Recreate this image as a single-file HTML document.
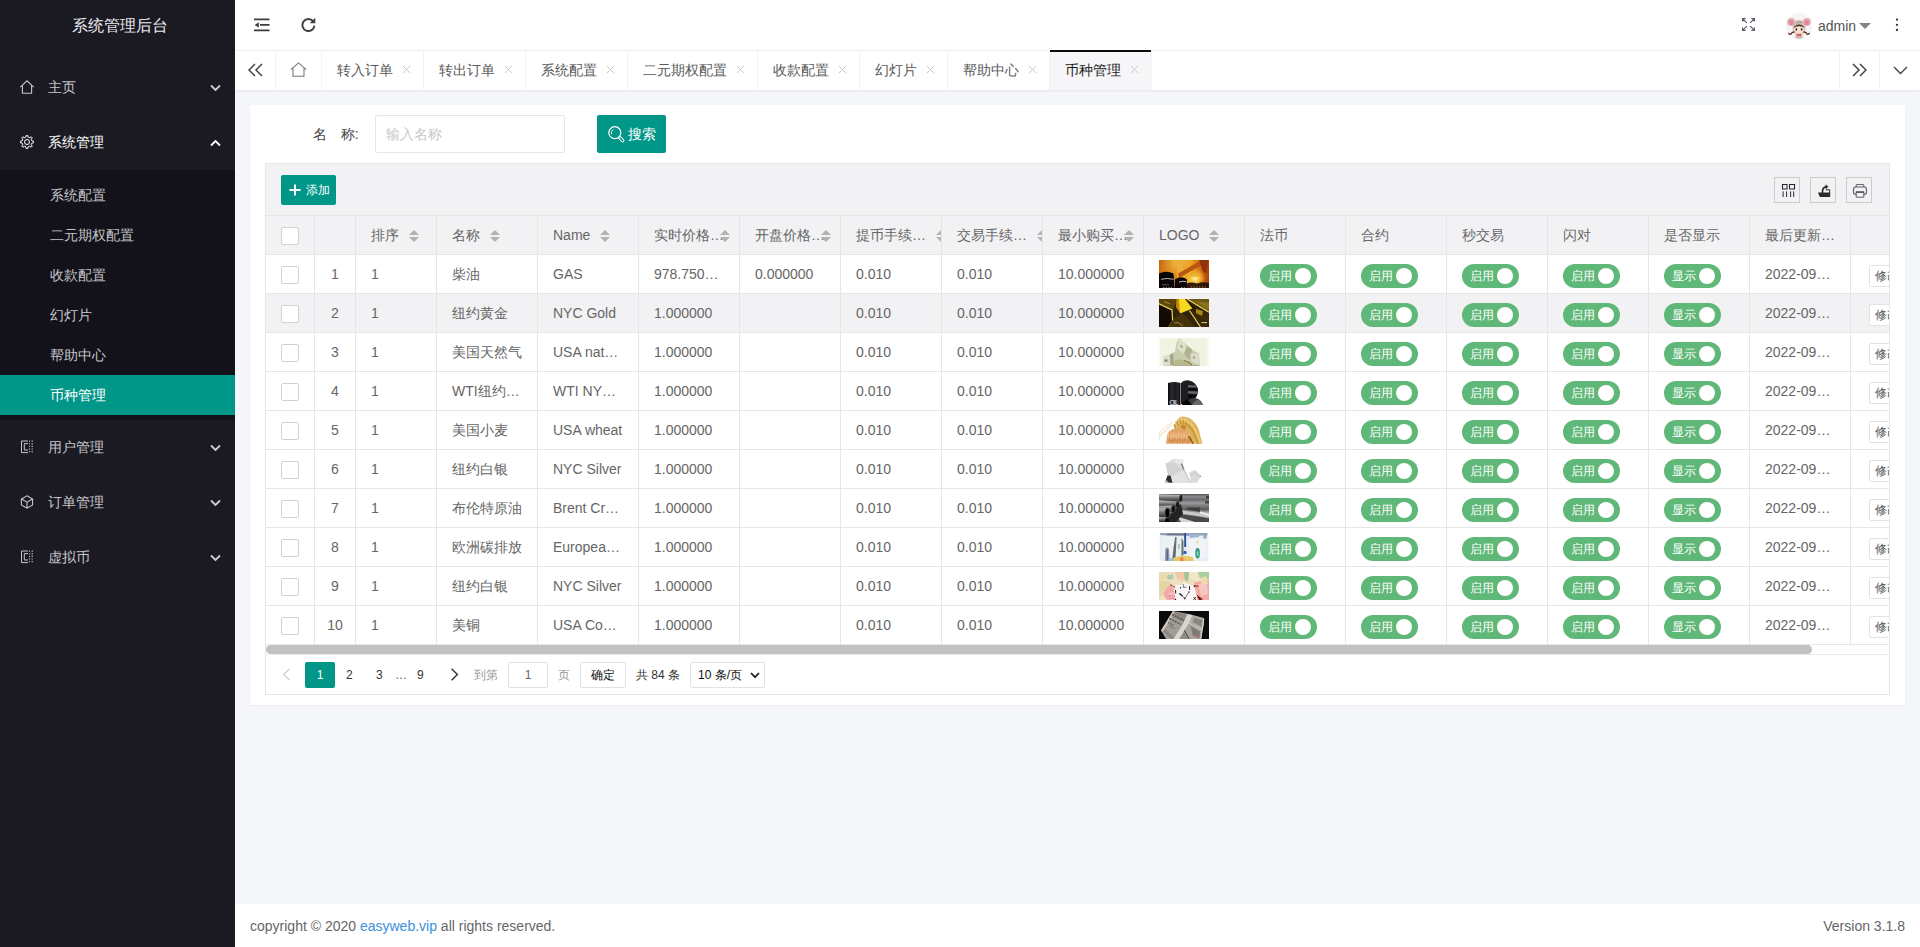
<!DOCTYPE html>
<html lang="zh">
<head>
<meta charset="utf-8">
<title>系统管理后台</title>
<style>
*{box-sizing:border-box;margin:0;padding:0}
html,body{width:1920px;height:947px;overflow:hidden}
body{font-family:"Liberation Sans",sans-serif;font-size:14px;color:#333;background:#f5f6f9;position:relative;line-height:24px}
a{text-decoration:none;color:inherit}
svg{display:block}
.abs{position:absolute}

/* ---------- sidebar ---------- */
#side{position:absolute;left:0;top:0;width:235px;height:947px;background:#1b1a23;color:rgba(255,255,255,.7);z-index:5}
#logo{position:absolute;left:2px;top:0;width:235px;height:50px;line-height:52px;text-align:center;font-size:16px;color:#ececee;letter-spacing:0}
.nav{position:absolute;left:0;top:60px;width:235px}
.item{position:relative;height:55px;line-height:55px;padding-left:48px;color:#c6c6c9;font-size:14px}
.item.on{color:#fff}
.item .ico{position:absolute;left:20px;top:20px;width:14px;height:14px}
.item .arr{position:absolute;left:210px;top:24px;width:11px;height:8px}
.sub{background:#13121a;padding:5px 0}
.sub div{height:40px;line-height:40px;padding-left:50px;color:#c6c6c9}
.sub div.this{background:#009688;color:#fff}

/* ---------- header ---------- */
#head{position:absolute;left:235px;top:0;width:1685px;height:50px;background:#fff}
#tabs{position:absolute;left:235px;top:50px;width:1685px;height:40px;background:#fff;border-top:1px solid #f0f0f1;box-shadow:0 1px 2px rgba(0,0,0,.08)}
.tab{position:absolute;top:-1px;height:40px;line-height:40px;border-right:1px solid #f3f3f4;color:#595959;font-size:14px;padding-left:15px;white-space:nowrap}
.tab .x{position:absolute;right:12px;top:15px;width:9px;height:9px}
.tab.this{color:#1a1a1a;background:#f6f6f8;box-shadow:inset 0 2px 0 #0c0c0e}

/* ---------- card ---------- */
#card{position:absolute;left:250px;top:105px;width:1655px;height:600px;background:#fff;border-radius:2px;box-shadow:0 1px 2px rgba(0,0,0,.05)}
#lbl{position:absolute;left:313px;top:115px;height:38px;line-height:38px;color:#444;font-size:14px;white-space:pre;word-spacing:.7px}
#inp{position:absolute;left:375px;top:115px;width:190px;height:38px;border:1px solid #e6e6e6;border-radius:2px;background:#fff;line-height:36px;padding-left:10px;color:#c8c8c8;font-size:14px}
#sbtn{position:absolute;left:597px;top:115px;width:69px;height:38px;background:#009688;border-radius:2px;color:#fff;font-size:14px;line-height:38px;padding-left:31px}
#sbtn svg{position:absolute;left:11px;top:11px}

#tview{position:absolute;left:265px;top:163px;width:1625px;height:532px;border:1px solid #e6e6e6;background:#fff;overflow:hidden}
#tool{position:absolute;left:0;top:0;width:1623px;height:52px;background:#f2f2f4;border-bottom:1px solid #e6e6e6}
#add{position:absolute;left:15px;top:11px;width:55px;height:30px;background:#009688;border-radius:2px;color:#fff;font-size:12px;line-height:30px;padding-left:25px}
#add svg{position:absolute;left:8px;top:9px}
.tb{position:absolute;top:13px;width:26px;height:26px;border:1px solid #ccc;background:#f2f2f4}
.tb svg{position:absolute;left:4px;top:4px}

table{position:absolute;left:0;top:52px;width:1645px;border-collapse:separate;border-spacing:0;table-layout:fixed}
th,td{height:39px;border-right:1px solid #e6e6e6;border-bottom:1px solid #e6e6e6;padding:0 0 0 15px;text-align:left;font-weight:400;font-size:14px;color:#666;white-space:nowrap;overflow:hidden;position:relative}
th{background:#f2f2f4;color:#666}
tr.hv td{background:#f2f2f4}
td.c,th.c{padding:0;text-align:center}
.cb{display:inline-block;width:18px;height:18px;border:1px solid #d2d2d2;border-radius:2px;background:#fff;vertical-align:middle;position:relative;top:0}
.sort{display:inline-block;position:relative;width:10px;height:20px;vertical-align:middle;margin-left:10px;top:0}
.sort:before{content:"";position:absolute;left:0;top:4px;border:5px solid transparent;border-top:0;border-bottom:5px solid #b2b2b2}
.sort:after{content:"";position:absolute;left:0;top:11px;border:5px solid transparent;border-bottom:0;border-top:5px solid #b2b2b2}
.sw{position:absolute;left:15px;top:9px;width:57px;height:24px;border-radius:12px;background:#5fb878;color:#fff;font-size:12px;line-height:24px;padding-left:8px}
.sw i{position:absolute;left:35px;top:4px;width:16px;height:16px;border-radius:8px;background:#fff}
.lg{position:absolute;left:15px;top:5px;width:50px;height:28px;overflow:hidden}
.eb{position:absolute;left:18px;top:10px;width:40px;height:22px;border:1px solid #e2e2e2;border-radius:2px;background:#fff;font-size:12px;line-height:20px;padding-left:5px;color:#555}

#hbar{position:absolute;left:0;top:481px;width:1546px;height:9px;border-radius:5px;background:#c1c1c1}
#page{position:absolute;left:0;top:490px;width:1623px;height:40px;border-top:1px solid #ebebee;font-size:12px;color:#333}
#page span,#page div{position:absolute;top:7px;height:26px;line-height:26px;white-space:nowrap}

#foot{position:absolute;left:235px;top:904px;width:1685px;height:43px;background:#fff;line-height:44px;padding:0 15px;color:#666;font-size:14px}
#foot b{font-weight:400;color:#3b8fd9}
</style>
</head>
<body>

<!-- SIDEBAR -->
<div id="side">
  <div id="logo">系统管理后台</div>
  <div class="nav">
    <div class="item"><svg class="ico" viewBox="0 0 14 14"><path d="M0.3 7.2 L7 0.8 L13.7 7.2 M2.4 5.6 V13.2 H11.6 V5.6" fill="none" stroke="#c6c6c9" stroke-width="1.1"/></svg>主页<svg class="arr" viewBox="0 0 11 8"><path d="M1 1.5 L5.5 6 L10 1.5" fill="none" stroke="#d0d0d3" stroke-width="1.8"/></svg></div>
    <div class="item on"><svg class="ico" viewBox="0 0 14 14"><path d="M5.93 2.12 L6.21 0.35 L7.79 0.35 L8.07 2.12 L9.70 2.79 L11.15 1.74 L12.26 2.85 L11.21 4.30 L11.88 5.93 L13.65 6.21 L13.65 7.79 L11.88 8.07 L11.21 9.70 L12.26 11.15 L11.15 12.26 L9.70 11.21 L8.07 11.88 L7.79 13.65 L6.21 13.65 L5.93 11.88 L4.30 11.21 L2.85 12.26 L1.74 11.15 L2.79 9.70 L2.12 8.07 L0.35 7.79 L0.35 6.21 L2.12 5.93 L2.79 4.30 L1.74 2.85 L2.85 1.74 L4.30 2.79 Z" fill="none" stroke="#fff" stroke-width="1" stroke-linejoin="round"/><circle cx="7" cy="7" r="2.5" fill="none" stroke="#fff" stroke-width="1"/></svg>系统管理<svg class="arr" viewBox="0 0 11 8"><path d="M1 6.5 L5.5 2 L10 6.5" fill="none" stroke="#fff" stroke-width="1.8"/></svg></div>
    <div class="sub">
      <div>系统配置</div>
      <div>二元期权配置</div>
      <div>收款配置</div>
      <div>幻灯片</div>
      <div>帮助中心</div>
      <div class="this">币种管理</div>
    </div>
    <div class="item"><svg class="ico" viewBox="0 0 14 14"><path d="M8 1 H1.5 V12.6 H8 M8 3.6 H4.3 V10 H8" fill="none" stroke="#c6c6c9" stroke-width="1"/><path d="M9.6 0.6 V13" stroke="#c6c6c9" stroke-width="1" stroke-dasharray="1.2 1.4"/><path d="M12.2 0.6 V13" stroke="#c6c6c9" stroke-width="1.2" stroke-dasharray="1.2 1.4"/></svg>用户管理<svg class="arr" viewBox="0 0 11 8"><path d="M1 1.5 L5.5 6 L10 1.5" fill="none" stroke="#d0d0d3" stroke-width="1.8"/></svg></div>
    <div class="item"><svg class="ico" viewBox="0 0 14 14"><path d="M7 0.8 L12.6 4 V10 L7 13.2 L1.4 10 V4 Z M1.6 4.1 L7 7.2 L12.4 4.1 M7 7.2 V13" fill="none" stroke="#c6c6c9" stroke-width="1.1"/></svg>订单管理<svg class="arr" viewBox="0 0 11 8"><path d="M1 1.5 L5.5 6 L10 1.5" fill="none" stroke="#d0d0d3" stroke-width="1.8"/></svg></div>
    <div class="item"><svg class="ico" viewBox="0 0 14 14"><path d="M8 1 H1.5 V12.6 H8 M8 3.6 H4.3 V10 H8" fill="none" stroke="#c6c6c9" stroke-width="1"/><path d="M9.6 0.6 V13" stroke="#c6c6c9" stroke-width="1" stroke-dasharray="1.2 1.4"/><path d="M12.2 0.6 V13" stroke="#c6c6c9" stroke-width="1.2" stroke-dasharray="1.2 1.4"/></svg>虚拟币<svg class="arr" viewBox="0 0 11 8"><path d="M1 1.5 L5.5 6 L10 1.5" fill="none" stroke="#d0d0d3" stroke-width="1.8"/></svg></div>
  </div>
</div>

<!-- HEADER -->
<div id="head">
  <svg class="abs" style="left:19px;top:17px" width="16" height="16" viewBox="0 0 16 16"><path d="M0 2.4 H15.5 M6 7.9 H15.5 M0 13.4 H15.5" stroke="#3d3d3f" stroke-width="1.9"/><path d="M0.6 7.9 L4.8 5.3 V10.5 Z" fill="#3d3d3f"/></svg>
  <svg class="abs" style="left:66px;top:17px" width="16" height="16" viewBox="0 0 16 16"><path d="M12.2 4.4 A6 6 0 1 0 13.4 8.6" fill="none" stroke="#3d3d3f" stroke-width="1.9"/><path d="M14.3 0.7 V6.3 H8.7 Z" fill="#3d3d3f"/></svg>
  <svg class="abs" style="left:1507px;top:18px" width="13" height="13" viewBox="0 0 13 13"><path d="M0.6 3.6 V0.6 H3.6 M0.8 0.8 L4.8 4.8 M9.4 0.6 H12.4 V3.6 M12.2 0.8 L8.2 4.8 M0.6 9.4 V12.4 H3.6 M0.8 12.2 L4.8 8.2 M12.4 9.4 V12.4 H9.4 M12.2 12.2 L8.2 8.2" fill="none" stroke="#565a66" stroke-width="1.15"/></svg>
  <svg class="abs" style="left:1550px;top:12px" width="28" height="28" viewBox="0 0 28 28"><circle cx="14" cy="14" r="13.2" fill="#f6f3f3"/><circle cx="6.2" cy="10" r="4.1" fill="#dcb3b4"/><circle cx="21.8" cy="10" r="4.1" fill="#dcb3b4"/><ellipse cx="6.3" cy="10.4" rx="2.3" ry="2.6" fill="#ee8296"/><ellipse cx="21.7" cy="10.4" rx="2.3" ry="2.6" fill="#ee8296"/><path d="M7.6 15 Q8 8.6 14 8 Q20 8.6 20.4 15 Q20.6 19 18.6 21.5 L9.4 21.5 Q7.4 19 7.6 15Z" fill="#cdb9ae"/><ellipse cx="14" cy="17.4" rx="4.9" ry="4.4" fill="#f8e2d4"/><path d="M9 15.2 Q14 10.4 19 15.2 Q14 12.6 9 15.2Z" fill="#4a3128" stroke="#4a3128" stroke-width=".5"/><path d="M11.7 10.6 Q12.5 9.6 13.3 10.6 M14.7 10.6 Q15.5 9.6 16.3 10.6" stroke="#5b4234" stroke-width=".6" fill="none"/><ellipse cx="11.4" cy="17.5" rx=".85" ry="1.15" fill="#2a1a16"/><ellipse cx="16.6" cy="17.5" rx=".85" ry="1.15" fill="#2a1a16"/><ellipse cx="9.9" cy="19.4" rx="1" ry=".6" fill="#f7c3bd"/><ellipse cx="18.1" cy="19.4" rx="1" ry=".6" fill="#f7c3bd"/><path d="M9 20 Q6.6 20.2 5.6 22.4 Q4.4 22.6 3.6 21.4" stroke="#5a3528" stroke-width="1.3" fill="none" stroke-linecap="round"/><path d="M19 20 Q21.4 20.2 22.4 22.4 Q23.6 22.6 24.4 21.4" stroke="#5a3528" stroke-width="1.3" fill="none" stroke-linecap="round"/><path d="M10.2 22.4 Q14 20.6 17.8 22.4 L17.4 26.2 Q14 27.6 10.6 26.2Z" fill="#cfc0b7"/><path d="M11.8 21.6 L14 22.6 L16.2 21.6 L15.6 24.4 L14 23.6 L12.4 24.4Z" fill="#e4483a"/></svg>
  <div class="abs" style="left:1583px;top:1px;height:50px;line-height:51px;font-size:14px;color:#555">admin</div>
  <svg class="abs" style="left:1624px;top:23px" width="12" height="6" viewBox="0 0 12 6"><path d="M0 0 H12 L6 6 Z" fill="#848484"/></svg>
  <svg class="abs" style="left:1660px;top:18px" width="4" height="14" viewBox="0 0 4 14"><circle cx="2" cy="1.6" r="1.15" fill="#333"/><circle cx="2" cy="6.8" r="1.15" fill="#333"/><circle cx="2" cy="12" r="1.15" fill="#333"/></svg>
</div>

<!-- TABS -->
<div id="tabs">
  <div class="tab" style="left:0;width:41px;padding:0"><svg class="abs" style="left:13px;top:13px" width="15" height="14" viewBox="0 0 15 14"><path d="M7 1 L1 7 L7 13 M14 1 L8 7 L14 13" fill="none" stroke="#444" stroke-width="1.5"/></svg></div>
  <div class="tab" style="left:41px;width:46px;padding:0"><svg class="abs" style="left:14px;top:12px" width="17" height="15" viewBox="0 0 17 15"><path d="M0.8 7.6 L8.5 0.9 L16.2 7.6 M3 6.2 V14.2 H14 V6.2" fill="none" stroke="#777" stroke-width="1.1"/></svg></div>
  <div class="tab" style="left:87px;width:102px">转入订单<svg class="x" viewBox="0 0 9 9"><path d="M1 1 L8 8 M8 1 L1 8" stroke="#c9c9c9" stroke-width="1"/></svg></div>
  <div class="tab" style="left:189px;width:102px">转出订单<svg class="x" viewBox="0 0 9 9"><path d="M1 1 L8 8 M8 1 L1 8" stroke="#c9c9c9" stroke-width="1"/></svg></div>
  <div class="tab" style="left:291px;width:102px">系统配置<svg class="x" viewBox="0 0 9 9"><path d="M1 1 L8 8 M8 1 L1 8" stroke="#c9c9c9" stroke-width="1"/></svg></div>
  <div class="tab" style="left:393px;width:130px">二元期权配置<svg class="x" viewBox="0 0 9 9"><path d="M1 1 L8 8 M8 1 L1 8" stroke="#c9c9c9" stroke-width="1"/></svg></div>
  <div class="tab" style="left:523px;width:102px">收款配置<svg class="x" viewBox="0 0 9 9"><path d="M1 1 L8 8 M8 1 L1 8" stroke="#c9c9c9" stroke-width="1"/></svg></div>
  <div class="tab" style="left:625px;width:88px">幻灯片<svg class="x" viewBox="0 0 9 9"><path d="M1 1 L8 8 M8 1 L1 8" stroke="#c9c9c9" stroke-width="1"/></svg></div>
  <div class="tab" style="left:713px;width:102px">帮助中心<svg class="x" viewBox="0 0 9 9"><path d="M1 1 L8 8 M8 1 L1 8" stroke="#c9c9c9" stroke-width="1"/></svg></div>
  <div class="tab this" style="left:815px;width:102px">币种管理<svg class="x" viewBox="0 0 9 9"><path d="M1 1 L8 8 M8 1 L1 8" stroke="#c9c9c9" stroke-width="1"/></svg></div>
  <div class="tab" style="left:1604px;width:41px;padding:0;border-left:1px solid #f3f3f4"><svg class="abs" style="left:12px;top:13px" width="15" height="14" viewBox="0 0 15 14"><path d="M1 1 L7 7 L1 13 M8 1 L14 7 L8 13" fill="none" stroke="#444" stroke-width="1.5"/></svg></div>
  <div class="tab" style="left:1645px;width:40px;padding:0;border-right:0"><svg class="abs" style="left:13px;top:16px" width="15" height="9" viewBox="0 0 15 9"><path d="M1 1 L7.5 7.5 L14 1" fill="none" stroke="#444" stroke-width="1.4"/></svg></div>
</div>

<!-- CARD -->
<div id="card"></div>
<div id="lbl">名   称:</div>
<div id="inp">输入名称</div>
<div id="sbtn"><svg width="18" height="18" viewBox="0 0 18 18"><circle cx="6.8" cy="6.7" r="6" fill="none" stroke="#fff" stroke-width="1.2"/><path d="M3.6 8.2 A3.5 3.5 0 0 1 5.2 3.6" fill="none" stroke="#fff" stroke-width="1"/><rect x="-1.3" y="0" width="2.6" height="6.2" rx="1.3" transform="translate(11.2 11.1) rotate(-45)" fill="none" stroke="#fff" stroke-width="1"/></svg>搜索</div>

<div id="tview">
  <div id="tool">
    <div id="add"><svg width="12" height="12" viewBox="0 0 12 12"><path d="M6 0.5 V11.5 M0.5 6 H11.5" stroke="#fff" stroke-width="2"/></svg>添加</div>
    <div class="tb" style="left:1508px"><svg width="18" height="16" viewBox="0 0 18 16"><path d="M3.5 2.5 H8 V7 H3.5 Z M10.5 2.5 H15.5 V7 H10.5 Z" fill="none" stroke="#2a2630" stroke-width="1.1"/><path d="M4.1 9.4 V15 M7.6 9.4 V15 M11.6 9.4 V15 M14.7 9.4 V15" stroke="#2a2630" stroke-width="1"/></svg></div>
    <div class="tb" style="left:1544px"><svg width="18" height="16" viewBox="0 0 18 16"><path d="M3 10.6 H15.2 V15 H4.8 Z" fill="#2b2b2b"/><path d="M10.8 7.8 H14.7 V11" fill="none" stroke="#2b2b2b" stroke-width="1"/><path d="M7.4 11 C7.2 7 8.6 4.9 11.2 4.9" fill="none" stroke="#2b2b2b" stroke-width="1.7"/><path d="M10.6 2.3 L13.4 4.8 L10.6 7.2 Z" fill="#2b2b2b"/></svg></div>
    <div class="tb" style="left:1580px"><svg width="18" height="17" viewBox="0 0 18 17"><path d="M5.2 5 V2.6 H12.8 V5" fill="none" stroke="#5d6068" stroke-width="1"/><rect x="2.5" y="5" width="13" height="7.4" rx="2.2" fill="none" stroke="#5d6068" stroke-width="1.1"/><path d="M5.2 10.2 H12.8 V15.2 H5.2 Z" fill="#f2f2f4" stroke="#5d6068" stroke-width="1"/><path d="M4.8 10 H13.2" stroke="#3a3a3a" stroke-width="1.2"/></svg></div>
  </div>
  <table id="tbl"><colgroup><col style="width:49px"><col style="width:41px"><col style="width:81px"><col style="width:101px"><col style="width:101px"><col style="width:101px"><col style="width:101px"><col style="width:101px"><col style="width:101px"><col style="width:101px"><col style="width:101px"><col style="width:101px"><col style="width:101px"><col style="width:101px"><col style="width:101px"><col style="width:101px"><col style="width:101px"><col style="width:60px"></colgroup>
<tr><th class="c"><span class="cb"></span></th><th class="c"></th><th>排序<i class="sort" style="position:absolute;left:53px;top:10px;margin:0"></i></th><th>名称<i class="sort" style="position:absolute;left:53px;top:10px;margin:0"></i></th><th>Name<i class="sort"></i></th><th>实时价格…<i class="sort" style="position:absolute;left:81px;top:10px;margin:0"></i></th><th>开盘价格…<i class="sort" style="position:absolute;left:81px;top:10px;margin:0"></i></th><th>提币手续…<i class="sort" style="position:absolute;left:95px;top:10px;margin:0"></i></th><th>交易手续…<i class="sort" style="position:absolute;left:95px;top:10px;margin:0"></i></th><th>最小购买…<i class="sort" style="position:absolute;left:81px;top:10px;margin:0"></i></th><th>LOGO<i class="sort"></i></th><th>法币</th><th>合约</th><th>秒交易</th><th>闪对</th><th>是否显示</th><th>最后更新…</th><th></th></tr>
<tr><td class="c"><span class="cb"></span></td><td class="c">1</td><td>1</td><td>柴油</td><td>GAS</td><td>978.750…</td><td>0.000000</td><td>0.010</td><td>0.010</td><td>10.000000</td><td><span class="lg"><svg width="50" height="28" viewBox="0 0 50 28"><defs><linearGradient id="g1a" x1="0" x2="1" y1="0" y2="0"><stop offset="0" stop-color="#c45e10"/><stop offset=".3" stop-color="#ecb43c"/><stop offset=".62" stop-color="#eea42a"/><stop offset=".85" stop-color="#c9610f"/><stop offset="1" stop-color="#a8420c"/></linearGradient><radialGradient id="g1b" cx="36" cy="18.5" r="11" gradientUnits="userSpaceOnUse"><stop offset="0" stop-color="#fff3a8"/><stop offset=".45" stop-color="#f9c838" stop-opacity=".85"/><stop offset="1" stop-color="#f0a020" stop-opacity="0"/></radialGradient><linearGradient id="g1c" x1="0" x2="0" y1="0" y2="1"><stop offset="0" stop-color="#e69a22" stop-opacity=".0"/><stop offset=".45" stop-color="#d8740f" stop-opacity=".45"/><stop offset="1" stop-color="#7a2c05" stop-opacity=".7"/></linearGradient></defs><rect width="50" height="28" fill="url(#g1a)"/><rect width="18" height="28" fill="url(#g1c)"/><rect width="50" height="28" fill="url(#g1b)"/><path d="M19 13.5 L40 1.5 L43.5 4.5 L20 18 Z" fill="#b4500f" opacity=".9"/><path d="M40 0 H49 L47.5 13 L44 12 Z" fill="#8a2d0a" opacity=".85"/><path d="M31 11 H40 V17 H31Z" fill="#e0a020" opacity=".5"/><path d="M0 13.5 Q7 10.2 14.5 13.5 L15.5 28 H0Z" fill="#090406"/><path d="M16 19.5 Q22 15 28 19.5 V28 H16Z" fill="#0b0507"/><path d="M27 24 Q32 21.5 38 23.5 Q44 21.5 50 23 V28 H27Z" fill="#231005" opacity=".92"/><path d="M2 19.3 Q8 17.6 14.5 19.3" stroke="#c9c9c9" stroke-width=".9" fill="none"/><path d="M20 22 Q24 20.6 27.5 21.8" stroke="#d5d5d5" stroke-width=".9" fill="none"/><path d="M3 24.8 H10" stroke="#777" stroke-width=".7"/><path d="M4 27.5 H13 M22 27.5 H27 M32 27 H48" stroke="#bda98a" stroke-width=".8" stroke-dasharray="1.2 1.5"/></svg></span></td><td><span class="sw">启用<i></i></span></td><td><span class="sw">启用<i></i></span></td><td><span class="sw">启用<i></i></span></td><td><span class="sw">启用<i></i></span></td><td><span class="sw">显示<i></i></span></td><td>2022-09…</td><td><span class="eb">修改</span></td></tr>
<tr class="hv"><td class="c"><span class="cb"></span></td><td class="c">2</td><td>1</td><td>纽约黄金</td><td>NYC Gold</td><td>1.000000</td><td></td><td>0.010</td><td>0.010</td><td>10.000000</td><td><span class="lg"><svg width="50" height="28" viewBox="0 0 50 28"><rect width="50" height="28" fill="#32230a"/><path d="M0 0 H19 L13.5 11.5 L0 5Z" fill="#5d4509"/><path d="M0 5.5 L13 11.5 L13.5 22 L9 28 H0Z" fill="#120b02"/><path d="M29 0 H50 V13 Z" fill="#6f5a12"/><path d="M36 2 L50 4 V11Z" fill="#8a7220"/><path d="M14 20 L24 14 L36 28 H9 Z" fill="#46330a"/><path d="M32 11.5 L50 15 V28 H42.5 Z" fill="#3a2a06"/><path d="M26 1 L36 9 L32 12 Z" fill="#1d1002"/><path d="M17.5 0 L23 0 L21 14 L17 8Z" fill="#c98a0c"/><path d="M20 0 H26 L33.5 9.5 L21 14.5 Z" fill="#f4d91e"/><path d="M37 10 L44 12 L43 17 L37 14Z" fill="#a8880f"/><path d="M0 4.8 L13 11 L13.6 21.5 M28 0 L50 13.2 M30.5 11.5 L41.5 28" stroke="#ead468" stroke-width="1.2" fill="none"/><path d="M13.6 21.5 L9.5 28" stroke="#6f5c1a" stroke-width=".8"/><path d="M15 24 L19 23.5 L24 27" stroke="#c9c08a" stroke-width="1" fill="none" opacity=".6"/><path d="M42.5 23.6 H48" stroke="#e8e0b0" stroke-width=".9"/><path d="M5 2.5 L11 5" stroke="#9c8a3a" stroke-width="1.2"/></svg></span></td><td><span class="sw">启用<i></i></span></td><td><span class="sw">启用<i></i></span></td><td><span class="sw">启用<i></i></span></td><td><span class="sw">启用<i></i></span></td><td><span class="sw">显示<i></i></span></td><td>2022-09…</td><td><span class="eb">修改</span></td></tr>
<tr><td class="c"><span class="cb"></span></td><td class="c">3</td><td>1</td><td>美国天然气</td><td>USA nat…</td><td>1.000000</td><td></td><td>0.010</td><td>0.010</td><td>10.000000</td><td><span class="lg"><svg width="50" height="28" viewBox="0 0 50 28"><rect width="50" height="28" fill="#fbfbf3"/><rect x="1" y="0" width="47.5" height="28" fill="#f2f2e2"/><path d="M20.3 0 L33 11.5 L40 15.5 L41 28 H4 L4 18.5 L10 17 L16 13.5 L17.5 5Z" fill="#c9cdae"/><path d="M20.3 0 L28 8 L25 16 L18 10Z" fill="#dfe1c9"/><path d="M28 8 L33 11.5 L31 22 L25 16Z" fill="#aeb38e"/><path d="M4 18.5 L10.5 17.5 L11 27 L4 28Z" fill="#dcdcd0"/><circle cx="7" cy="22.5" r="1.6" fill="#8d917c"/><path d="M11 17 L14 15 L15 27 L11.5 27Z" fill="#a3a78a"/><path d="M31 16 L39.5 15.5 L40.5 27 L33 24Z" fill="#dcdccc"/><circle cx="35" cy="19.5" r="1.3" fill="#a9a890"/><path d="M21.5 7 L23.5 9.5" stroke="#7f8266" stroke-width="1.2"/><path d="M16 22 Q24 20 32 26 L30 28 H15Z" fill="#b9b78c"/><path d="M25 22.5 Q30 23.5 33 27" stroke="#7d7440" stroke-width="1.2" fill="none"/><path d="M14 27.3 H40" stroke="#a9ad86" stroke-width="1"/></svg></span></td><td><span class="sw">启用<i></i></span></td><td><span class="sw">启用<i></i></span></td><td><span class="sw">启用<i></i></span></td><td><span class="sw">启用<i></i></span></td><td><span class="sw">显示<i></i></span></td><td>2022-09…</td><td><span class="eb">修改</span></td></tr>
<tr><td class="c"><span class="cb"></span></td><td class="c">4</td><td>1</td><td>WTI纽约…</td><td>WTI NY…</td><td>1.000000</td><td></td><td>0.010</td><td>0.010</td><td>10.000000</td><td><span class="lg"><svg width="50" height="28" viewBox="0 0 50 28"><defs><linearGradient id="g4a" x1="0" x2="1" y1="0" y2="0"><stop offset="0" stop-color="#09090b"/><stop offset=".3" stop-color="#2e2d31"/><stop offset=".55" stop-color="#1a191c"/><stop offset=".8" stop-color="#2a292d"/><stop offset="1" stop-color="#0b0b0d"/></linearGradient></defs><path d="M9 6 Q15 4 21.5 6 V28 H9Z" fill="url(#g4a)"/><path d="M22 6 Q25 2.5 30 3.5 Q37 5 39 12 Q39.5 19 35 22 L30 27 H22Z" fill="#1d1c20"/><path d="M29 8 L37 8.5 L38 10.5 L29 10.5Z M29 14 L38.5 14.5 L38.5 17 L29 16.5Z" fill="#65646a"/><path d="M29 11 H38.2 V13.6 H29Z M29 17.5 L38 18 L36 21.5 L29 21Z" fill="#08080a"/><path d="M26 28 Q29 21 36 21 Q42 22 44 28Z" fill="#3c3b40"/><path d="M33 28 Q36 22.5 40 23 Q43 24.5 44 28Z" fill="#6a696e"/><path d="M23 26 L28 22 L33 28 H23Z" fill="#050506"/><text x="10.5" y="28" font-family="Liberation Sans,sans-serif" font-size="6.5" fill="#f4f4f4" textLength="9">OIL</text></svg></span></td><td><span class="sw">启用<i></i></span></td><td><span class="sw">启用<i></i></span></td><td><span class="sw">启用<i></i></span></td><td><span class="sw">启用<i></i></span></td><td><span class="sw">显示<i></i></span></td><td>2022-09…</td><td><span class="eb">修改</span></td></tr>
<tr><td class="c"><span class="cb"></span></td><td class="c">5</td><td>1</td><td>美国小麦</td><td>USA wheat</td><td>1.000000</td><td></td><td>0.010</td><td>0.010</td><td>10.000000</td><td><span class="lg"><svg width="50" height="28" viewBox="0 0 50 28"><path d="M0.5 24 L1 16 Q6 10 14 6" stroke="#f1e4c6" stroke-width="1" fill="none"/><path d="M1 20 L12 9" stroke="#f3e7cc" stroke-width="1.2" fill="none"/><path d="M16 9 Q18 3 22 0.8 Q29 -0.5 36 7 Q40 12 41 19 L43.5 27.8 H36 L28 17 L18 15Z" fill="#dcb259"/><path d="M7 27.8 L8 20 L10.5 15 L14 13 Q22 11 28 15 L35 27.8Z" fill="#e2a567"/><ellipse cx="17.5" cy="8.0" rx="1.1" ry="3" transform="rotate(-18 17.5 8.0)" fill="#e9c978"/><ellipse cx="15.9" cy="10.5" rx=".9" ry="2.6" transform="rotate(-18 15.9 10.5)" fill="#c9953a"/><ellipse cx="20.0" cy="5.0" rx="1.1" ry="3" transform="rotate(-18 20.0 5.0)" fill="#e9c978"/><ellipse cx="18.4" cy="7.5" rx=".9" ry="2.6" transform="rotate(-18 18.4 7.5)" fill="#c9953a"/><ellipse cx="23.0" cy="4.0" rx="1.1" ry="3" transform="rotate(-18 23.0 4.0)" fill="#e9c978"/><ellipse cx="21.4" cy="6.5" rx=".9" ry="2.6" transform="rotate(-18 21.4 6.5)" fill="#c9953a"/><ellipse cx="26.0" cy="4.2" rx="1.1" ry="3" transform="rotate(-18 26.0 4.2)" fill="#e9c978"/><ellipse cx="24.4" cy="6.7" rx=".9" ry="2.6" transform="rotate(-18 24.4 6.7)" fill="#c9953a"/><ellipse cx="29.0" cy="5.5" rx="1.1" ry="3" transform="rotate(-18 29.0 5.5)" fill="#e9c978"/><ellipse cx="27.4" cy="8.0" rx=".9" ry="2.6" transform="rotate(-18 27.4 8.0)" fill="#c9953a"/><ellipse cx="32.0" cy="8.0" rx="1.1" ry="3" transform="rotate(-18 32.0 8.0)" fill="#e9c978"/><ellipse cx="30.4" cy="10.5" rx=".9" ry="2.6" transform="rotate(-18 30.4 10.5)" fill="#c9953a"/><ellipse cx="34.5" cy="11.0" rx="1.1" ry="3" transform="rotate(-18 34.5 11.0)" fill="#e9c978"/><ellipse cx="32.9" cy="13.5" rx=".9" ry="2.6" transform="rotate(-18 32.9 13.5)" fill="#c9953a"/><ellipse cx="36.5" cy="14.5" rx="1.1" ry="3" transform="rotate(-18 36.5 14.5)" fill="#e9c978"/><ellipse cx="34.9" cy="17.0" rx=".9" ry="2.6" transform="rotate(-18 34.9 17.0)" fill="#c9953a"/><ellipse cx="38.0" cy="18.0" rx="1.1" ry="3" transform="rotate(-18 38.0 18.0)" fill="#e9c978"/><ellipse cx="36.4" cy="20.5" rx=".9" ry="2.6" transform="rotate(-18 36.4 20.5)" fill="#c9953a"/><ellipse cx="39.5" cy="22.0" rx="1.1" ry="3" transform="rotate(-18 39.5 22.0)" fill="#e9c978"/><ellipse cx="37.9" cy="24.5" rx=".9" ry="2.6" transform="rotate(-18 37.9 24.5)" fill="#c9953a"/><ellipse cx="41.0" cy="26.0" rx="1.1" ry="3" transform="rotate(-18 41.0 26.0)" fill="#e9c978"/><ellipse cx="39.4" cy="28.5" rx=".9" ry="2.6" transform="rotate(-18 39.4 28.5)" fill="#c9953a"/><ellipse cx="9.5" cy="19.5" rx="1" ry="3.2" fill="#edb983"/><ellipse cx="10.7" cy="24.0" rx=".9" ry="2.8" fill="#cf8b4c"/><ellipse cx="12.1" cy="20.5" rx="1" ry="3.2" fill="#edb983"/><ellipse cx="13.3" cy="25.0" rx=".9" ry="2.8" fill="#cf8b4c"/><ellipse cx="14.7" cy="19.5" rx="1" ry="3.2" fill="#edb983"/><ellipse cx="15.9" cy="24.0" rx=".9" ry="2.8" fill="#cf8b4c"/><ellipse cx="17.3" cy="20.5" rx="1" ry="3.2" fill="#edb983"/><ellipse cx="18.5" cy="25.0" rx=".9" ry="2.8" fill="#cf8b4c"/><ellipse cx="19.9" cy="19.5" rx="1" ry="3.2" fill="#edb983"/><ellipse cx="21.1" cy="24.0" rx=".9" ry="2.8" fill="#cf8b4c"/><ellipse cx="22.5" cy="20.5" rx="1" ry="3.2" fill="#edb983"/><ellipse cx="23.7" cy="25.0" rx=".9" ry="2.8" fill="#cf8b4c"/><ellipse cx="25.1" cy="19.5" rx="1" ry="3.2" fill="#edb983"/><ellipse cx="26.3" cy="24.0" rx=".9" ry="2.8" fill="#cf8b4c"/><ellipse cx="27.7" cy="20.5" rx="1" ry="3.2" fill="#edb983"/><ellipse cx="28.9" cy="25.0" rx=".9" ry="2.8" fill="#cf8b4c"/><ellipse cx="30.3" cy="19.5" rx="1" ry="3.2" fill="#edb983"/><ellipse cx="31.5" cy="24.0" rx=".9" ry="2.8" fill="#cf8b4c"/><path d="M21 11 Q24 7.5 27 10.5 L26 14Z" fill="#c48733"/><path d="M29.5 20 L34.5 27.8" stroke="#9d5f1c" stroke-width="1.7"/></svg></span></td><td><span class="sw">启用<i></i></span></td><td><span class="sw">启用<i></i></span></td><td><span class="sw">启用<i></i></span></td><td><span class="sw">启用<i></i></span></td><td><span class="sw">显示<i></i></span></td><td>2022-09…</td><td><span class="eb">修改</span></td></tr>
<tr><td class="c"><span class="cb"></span></td><td class="c">6</td><td>1</td><td>纽约白银</td><td>NYC Silver</td><td>1.000000</td><td></td><td>0.010</td><td>0.010</td><td>10.000000</td><td><span class="lg"><svg width="50" height="28" viewBox="0 0 50 28"><path d="M6.5 8.5 L15 3.5 L24.5 4.5 L24 9.5 L26 14 L32 27.8 H6 L9 20Z" fill="#dedede"/><path d="M15 3.5 L24.5 4.5 L24 9.5 L16 8Z" fill="#e9e9e9"/><path d="M6.5 8.5 L16 8 L24 15 L13 21 L9 20Z" fill="#d2d2d2"/><path d="M13 21 L24 15 L31 27.8 H16Z" fill="#e2e2e4"/><path d="M6 27.5 L8.5 20.5 L11.5 20.5 L13.5 27.8Z" fill="#2f2f31"/><path d="M6 27.8 L7 25 L10 27.8Z" fill="#cfcfcf"/><path d="M22.5 8.5 L24.5 14.5" stroke="#6e6e6e" stroke-width="1.1"/><path d="M24.5 15 L31.5 27.5" stroke="#b9b9b9" stroke-width=".7"/><path d="M30 17.5 L36 14.8 L42 21 L38 27.8 H32Z" fill="#dadada"/><path d="M31 20 L37 17.5 L40.5 21.5" stroke="#c3c3c3" stroke-width=".8" fill="none"/><path d="M41.3 20.6 L42 22" stroke="#8a8a8a" stroke-width="1"/></svg></span></td><td><span class="sw">启用<i></i></span></td><td><span class="sw">启用<i></i></span></td><td><span class="sw">启用<i></i></span></td><td><span class="sw">启用<i></i></span></td><td><span class="sw">显示<i></i></span></td><td>2022-09…</td><td><span class="eb">修改</span></td></tr>
<tr><td class="c"><span class="cb"></span></td><td class="c">7</td><td>1</td><td>布伦特原油</td><td>Brent Cr…</td><td>1.000000</td><td></td><td>0.010</td><td>0.010</td><td>10.000000</td><td><span class="lg"><svg width="50" height="28" viewBox="0 0 50 28"><defs><linearGradient id="g7a" x1="0" x2="0" y1="0" y2="1"><stop offset="0" stop-color="#5a5a5c"/><stop offset=".1" stop-color="#8c8c8e"/><stop offset=".2" stop-color="#6b6b6d"/><stop offset=".32" stop-color="#9a9a9c"/><stop offset=".45" stop-color="#737375"/><stop offset=".55" stop-color="#5a5a5c"/><stop offset=".68" stop-color="#bdbdbf"/><stop offset=".78" stop-color="#68686a"/><stop offset="1" stop-color="#4a4a4c"/></linearGradient><linearGradient id="g7b" x1="0" x2="0" y1="0" y2="1"><stop offset="0" stop-color="#c2c2c4"/><stop offset=".45" stop-color="#77777a"/><stop offset="1" stop-color="#2b2b2d"/></linearGradient></defs><rect width="50" height="28" fill="url(#g7a)"/><path d="M22 16 L50 21.5 V24 L21 19Z" fill="#c9c9cb"/><path d="M20 20 L50 25 V28 H36 L19 22Z" fill="#48484a"/><path d="M18 22.5 L36 28 H22Z" fill="#d4d4d6"/><path d="M28 13.5 H41 V18 L28 15.5Z" fill="#3d3d3f"/><path d="M41 17.5 L50 20 V22 L41 19.5Z" fill="#ededee"/><rect x="47" y="2" width="3" height="2.6" fill="#3f3f41"/><rect x="46.2" y="7" width="3.8" height="2.6" fill="#444446"/><path d="M9 22 L22 10 L24 20 L17 28 H8Z" fill="#232325"/><path d="M0 0.6 L21 1 L22 7.5 L0 5.8Z" fill="url(#g7b)"/><path d="M0 6.4 L18 8 L19 13.5 L0 12.5Z" fill="url(#g7b)"/><path d="M0 12 L14 11.5 L14.5 18.5 L0 17.6Z" fill="url(#g7b)"/><path d="M0 14.5 L8 14 L8.5 23.5 L0 22.5Z" fill="url(#g7b)"/><path d="M0 23 L7 23.6 L6 28 H0Z" fill="url(#g7b)"/><ellipse cx="21.9" cy="4.2" rx="1.5" ry="3.3" fill="#1a1a1c"/><ellipse cx="18.7" cy="10.6" rx="1.6" ry="3" fill="#171719"/><ellipse cx="14.3" cy="15" rx="1.9" ry="3.7" fill="#0a0a0b" stroke="#5c5c5f" stroke-width=".7"/><ellipse cx="8.4" cy="18.8" rx="2.5" ry="4.9" fill="#030304" stroke="#666669" stroke-width=".8"/><ellipse cx="8" cy="27" rx="2" ry="3" fill="#060607"/></svg></span></td><td><span class="sw">启用<i></i></span></td><td><span class="sw">启用<i></i></span></td><td><span class="sw">启用<i></i></span></td><td><span class="sw">启用<i></i></span></td><td><span class="sw">显示<i></i></span></td><td>2022-09…</td><td><span class="eb">修改</span></td></tr>
<tr><td class="c"><span class="cb"></span></td><td class="c">8</td><td>1</td><td>欧洲碳排放</td><td>Europea…</td><td>1.000000</td><td></td><td>0.010</td><td>0.010</td><td>10.000000</td><td><span class="lg"><svg width="50" height="28" viewBox="0 0 50 28"><rect width="50" height="28" fill="#f7f9fb"/><rect x="1" y="0" width="47.5" height="28" fill="#e6edf3"/><rect x="3" y="4" width="12" height="18" fill="#eef1f4"/><rect x="30" y="6" width="17" height="20" fill="#f1f3f6"/><path d="M1 0 H48.5 V2.2 L30 3 L8 2.4 L1 2Z" fill="#9aa3b6"/><path d="M8 0.6 H25 V2.2 H8Z" fill="#6d7488"/><path d="M30 1 H40 V4 L31 5Z" fill="#9fb4d3"/><path d="M44 0.5 H47.5 V5 L45 6Z" fill="#8fa3c2"/><path d="M16.2 4 L17.6 4 L16.6 24 L13.2 27 L14.6 14Z" fill="#5f716b"/><path d="M22.6 5 L24.4 8 L24.6 22 L22.4 23Z" fill="#64756f"/><path d="M19.5 11 L20.5 11 L20.3 16 L19.4 16Z" fill="#8a9792"/><rect x="25.2" y="0" width="1.9" height="14" fill="#2c4f99"/><circle cx="26" cy="19.5" r="1.7" fill="#2d62b5"/><path d="M6.3 16 Q8 13 10 16 L10.5 28 H6Z" fill="#8c95ab"/><path d="M7.6 17 H9 V27 H7.6Z" fill="#5c6785"/><path d="M11 25 H15 V28 H11Z" fill="#9fc4cf"/><path d="M15 24.5 Q24 22 34 24 L34.5 28 H15Z" fill="#eac768"/><path d="M21 25 Q22.5 23.6 24.5 25 V28 H21Z" fill="#ef8246"/><ellipse cx="38.6" cy="20.3" rx="2.3" ry="5.2" fill="#2f9a80"/><ellipse cx="38.7" cy="20.5" rx="1" ry="2.8" fill="#7fd3bd"/><path d="M37 8 L39 7 L40 10 L38 11Z" fill="#f4dda6"/></svg></span></td><td><span class="sw">启用<i></i></span></td><td><span class="sw">启用<i></i></span></td><td><span class="sw">启用<i></i></span></td><td><span class="sw">启用<i></i></span></td><td><span class="sw">显示<i></i></span></td><td>2022-09…</td><td><span class="eb">修改</span></td></tr>
<tr><td class="c"><span class="cb"></span></td><td class="c">9</td><td>1</td><td>纽约白银</td><td>NYC Silver</td><td>1.000000</td><td></td><td>0.010</td><td>0.010</td><td>10.000000</td><td><span class="lg"><svg width="50" height="28" viewBox="0 0 50 28"><rect width="50" height="28" fill="#efe2c2"/><path d="M0 0 H16 L14 9 L0 7Z" fill="#e9dcae"/><path d="M7 2 H13.5 V7.5 H7Z" fill="#dfe6c6"/><text x="8" y="7" font-family="Liberation Sans,sans-serif" font-size="5.5" fill="#5c9a8a">50</text><path d="M16 0 H29 L28 9 L18 7Z" fill="#f0c9a6"/><path d="M25 0 H30 L29 10 L26 8Z" fill="#9cc79a"/><path d="M38 0 H50 V7 L41 6Z" fill="#a9cf9f"/><path d="M30 0 H39 L40 9 L33 10Z" fill="#f3e6c9"/><path d="M3 14 L14 13 L16 28 H8 L4 22Z" fill="#f2a8aa"/><path d="M9 21 L14.5 20.5 L15.5 28 H10Z" fill="#f7c0c0"/><text x="9.3" y="27" font-family="Liberation Sans,sans-serif" font-size="6" fill="#e46a78">50</text><path d="M0 8 L12 10 L4 22 L0 26Z" fill="#e5d6a8"/><path d="M36 10 L50 8 V28 H38 L34 18Z" fill="#f2aaa6"/><path d="M39 12 L48 11 L49 22 L42 24Z" fill="#f6c6c0"/><path d="M37.5 22.5 L44 27.5 L40 28 Z" fill="#7c0d0d"/><path d="M34.5 14 H39.5" stroke="#b71c1c" stroke-width="1.1"/><path d="M41 6 L47 4 L49 12 L43 13Z" fill="#eed9b0"/><path d="M16.5 13 Q26 9 35.5 14 L38.5 28 H16Z" fill="#fbf7f8"/><path d="M18 9 L22 8 L23 12 L19 13Z M32 8 L35 9 L34 13 L31 12Z" fill="#f0e6c8" stroke="#d8c79a" stroke-width=".5"/><path d="M24.2 12 L24.4 15.5 L27.5 15.2" stroke="#6b6b6b" stroke-width=".9" fill="none"/><path d="M30.5 14 L30.6 18 M16.5 18 L16.7 21.5" stroke="#333" stroke-width="1.1"/><circle cx="21.5" cy="15.7" r=".7" fill="#111"/><circle cx="30" cy="20" r=".75" fill="#222"/><circle cx="25.7" cy="26.4" r=".85" fill="#111"/><circle cx="16.5" cy="27.4" r=".7" fill="#111"/><path d="M20 21 L25.7 26.4 L30 20" stroke="#444" stroke-width=".7" fill="none"/><path d="M20.5 21.5 L23.5 24" stroke="#222" stroke-width="1.3"/><path d="M34.5 25 L37 28 M37 25 L34.5 28" stroke="#222" stroke-width=".8"/><path d="M11.5 12.5 L13 13.8 M14.5 14 L15.5 15.5" stroke="#5a4a2a" stroke-width="1.1"/><path d="M35 14 L36 14.6" stroke="#111" stroke-width="1.4"/></svg></span></td><td><span class="sw">启用<i></i></span></td><td><span class="sw">启用<i></i></span></td><td><span class="sw">启用<i></i></span></td><td><span class="sw">启用<i></i></span></td><td><span class="sw">显示<i></i></span></td><td>2022-09…</td><td><span class="eb">修改</span></td></tr>
<tr><td class="c"><span class="cb"></span></td><td class="c">10</td><td>1</td><td>美铜</td><td>USA Co…</td><td>1.000000</td><td></td><td>0.010</td><td>0.010</td><td>10.000000</td><td><span class="lg"><svg width="50" height="28" viewBox="0 0 50 28"><rect width="50" height="28" fill="#0b0b0b"/><path d="M14 0 L30 3 L44.5 7 L45 12 L42 28 H7 L2 19.5Z" fill="#a19c97"/><path d="M14.5 0.5 L28 3.5 L24 11 L13 5Z" fill="#8d8982"/><path d="M14 0 L2 19.5 L3.5 21 L15.5 1Z" fill="#cfcbc4"/><path d="M28.5 3 L33.5 4.2 L29 14 L20 28 H14.5 L24 13Z" fill="#d9d6d0"/><path d="M33.5 4.2 L44.5 7.2 L45 12 L43 19 L30.5 12Z" fill="#b2aea6"/><path d="M35 6.5 L43.5 9 L43 16 L33.5 11Z" fill="#8b877f"/><path d="M30 12.5 L42.5 19.5 L41.5 28 H29 L25.5 20Z" fill="#a8a49c"/><path d="M31.5 15 L41 20.5 L40.5 27 L34 25Z" fill="#7f7b73"/><path d="M25.5 19.5 L31 28 H21Z" fill="#8e8a84"/><path d="M25.3 19.3 L30 27.5" stroke="#4a463f" stroke-width="1"/><path d="M29.5 12 L43 19.3" stroke="#d8d4cc" stroke-width=".8"/><path d="M44.8 7.5 L41.8 28" stroke="#dedad2" stroke-width="1"/><path d="M13 3.5 L25 9.5 M10.5 7.5 L22 13.5" stroke="#5b5750" stroke-width="1.6" stroke-dasharray="2 1"/><path d="M9 11.5 L15 14.5 M10.5 14.5 L15.5 17.5" stroke="#6b675f" stroke-width="1.4" stroke-dasharray="1.5 1"/><path d="M5 19 L14 27.5" stroke="#8a867e" stroke-width="3"/><path d="M37 24 L40 25.5 L39.5 27.5 L36.5 26Z" fill="#b07878"/></svg></span></td><td><span class="sw">启用<i></i></span></td><td><span class="sw">启用<i></i></span></td><td><span class="sw">启用<i></i></span></td><td><span class="sw">启用<i></i></span></td><td><span class="sw">显示<i></i></span></td><td>2022-09…</td><td><span class="eb">修改</span></td></tr>
</table>
  <div id="hbar"></div>
  <div id="page">
<svg class="abs" style="left:16px;top:13px" width="9" height="13" viewBox="0 0 9 13"><path d="M7.6 0.8 L1.6 6.5 L7.6 12.2" fill="none" stroke="#d0d0d0" stroke-width="1.2"/></svg>
<div style="left:39px;width:30px;background:#009688;color:#fff;text-align:center;border-radius:2px">1</div>
<span style="left:80px">2</span><span style="left:110px">3</span><span style="left:129px;color:#666">…</span><span style="left:151px">9</span>
<svg class="abs" style="left:184px;top:13px" width="9" height="13" viewBox="0 0 9 13"><path d="M1.6 0.8 L7.4 6.5 L1.6 12.2" fill="none" stroke="#333" stroke-width="1.4"/></svg>
<span style="left:208px;color:#999">到第</span>
<div style="left:242px;width:40px;border:1px solid #e2e2e2;border-radius:2px;text-align:center;line-height:24px;color:#666">1</div>
<span style="left:292px;color:#999">页</span>
<div style="left:314px;width:46px;border:1px solid #e2e2e2;border-radius:2px;text-align:center;line-height:24px;color:#111">确定</div>
<span style="left:370px">共 84 条</span>
<div style="left:424px;width:75px;border:1px solid #e2e2e2;border-radius:2px;line-height:24px;padding-left:7px;color:#111">10 条/页<svg class="abs" style="left:59px;top:9px" width="10" height="7" viewBox="0 0 10 7"><path d="M1 1 L5 5.2 L9 1" fill="none" stroke="#222" stroke-width="1.8"/></svg></div>
</div>
</div>

<!-- FOOTER -->
<div id="foot">copyright © 2020 <b>easyweb.vip</b> all rights reserved.<span style="position:absolute;right:15px;top:0">Version 3.1.8</span></div>

</body>
</html>
